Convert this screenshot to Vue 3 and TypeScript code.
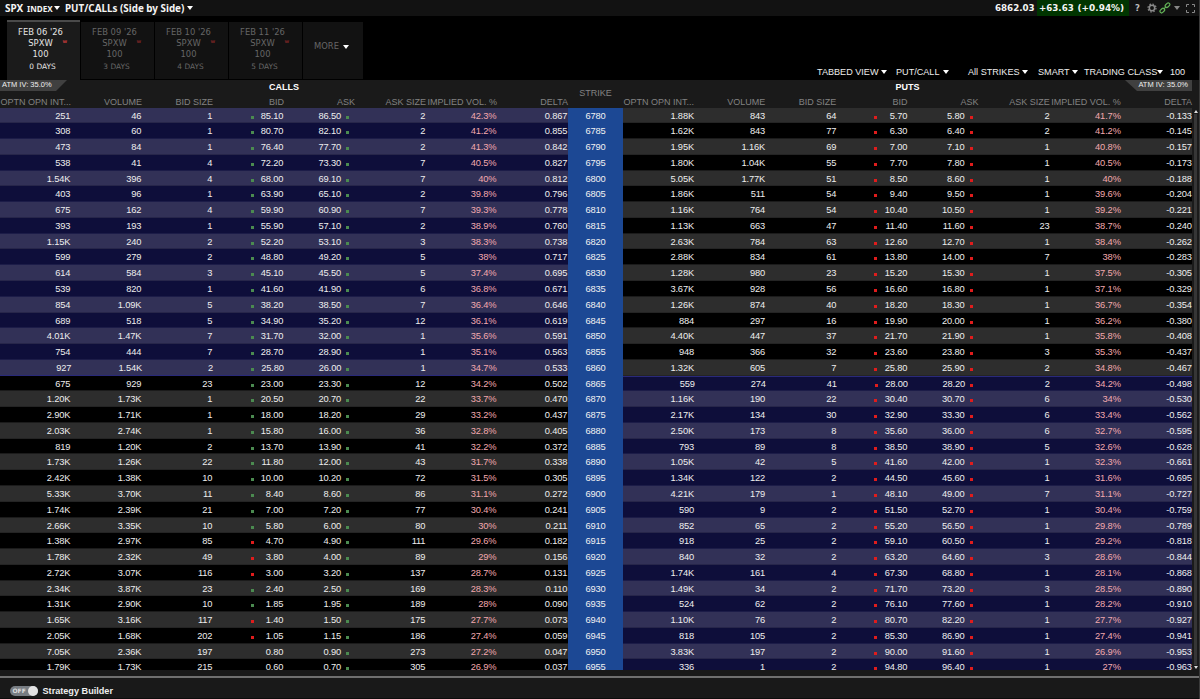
<script setup lang="ts">
interface Side { cells: string[]; bidDot: string; askDot: string }
interface Row { strike: number; call: Side; put: Side }

const callData = `251 46 1 85.10 86.50 2 42.3% 0.867
308 60 1 80.70 82.10 2 41.2% 0.855
473 84 1 76.40 77.70 2 41.3% 0.842
538 41 4 72.20 73.30 7 40.5% 0.827
1.54K 396 4 68.00 69.10 7 40% 0.812
403 96 1 63.90 65.10 2 39.8% 0.796
675 162 4 59.90 60.90 7 39.3% 0.778
393 193 1 55.90 57.10 2 38.9% 0.760
1.15K 240 2 52.20 53.10 3 38.3% 0.738
599 279 2 48.80 49.20 5 38% 0.717
614 584 3 45.10 45.50 5 37.4% 0.695
539 820 1 41.60 41.90 6 36.8% 0.671
854 1.09K 5 38.20 38.50 7 36.4% 0.646
689 518 5 34.90 35.20 12 36.1% 0.619
4.01K 1.47K 7 31.70 32.00 1 35.6% 0.591
754 444 7 28.70 28.90 1 35.1% 0.563
927 1.54K 2 25.80 26.00 1 34.7% 0.533
675 929 23 23.00 23.30 12 34.2% 0.502
1.20K 1.73K 1 20.50 20.70 22 33.7% 0.470
2.90K 1.71K 1 18.00 18.20 29 33.2% 0.437
2.03K 2.74K 1 15.80 16.00 36 32.8% 0.405
819 1.20K 2 13.70 13.90 41 32.2% 0.372
1.73K 1.26K 22 11.80 12.00 43 31.7% 0.338
2.42K 1.38K 10 10.00 10.20 72 31.5% 0.305
5.33K 3.70K 11 8.40 8.60 86 31.1% 0.272
1.74K 2.39K 21 7.00 7.20 77 30.4% 0.241
2.66K 3.35K 10 5.80 6.00 80 30% 0.211
1.38K 2.97K 85 4.70 4.90 111 29.6% 0.182
1.78K 2.32K 49 3.80 4.00 89 29% 0.156
2.72K 3.07K 116 3.00 3.20 137 28.7% 0.131
2.34K 3.87K 23 2.40 2.50 169 28.3% 0.110
1.31K 2.90K 10 1.85 1.95 189 28% 0.090
1.65K 3.16K 117 1.40 1.50 175 27.7% 0.073
2.05K 1.68K 202 1.05 1.15 186 27.4% 0.059
7.05K 2.36K 197 0.80 0.90 273 27.2% 0.047
1.79K 1.73K 215 0.60 0.70 305 26.9% 0.037`

const putData = `1.88K 843 64 5.70 5.80 2 41.7% -0.133
1.62K 843 77 6.30 6.40 2 41.2% -0.145
1.95K 1.16K 69 7.00 7.10 1 40.8% -0.157
1.80K 1.04K 55 7.70 7.80 1 40.5% -0.173
5.05K 1.77K 51 8.50 8.60 1 40% -0.188
1.86K 511 54 9.40 9.50 1 39.6% -0.204
1.16K 764 54 10.40 10.50 1 39.2% -0.221
1.13K 663 47 11.40 11.60 23 38.7% -0.240
2.63K 784 63 12.60 12.70 1 38.4% -0.262
2.88K 834 61 13.80 14.00 7 38% -0.283
1.28K 980 23 15.20 15.30 1 37.5% -0.305
3.67K 928 56 16.60 16.80 1 37.1% -0.329
1.26K 874 40 18.20 18.30 1 36.7% -0.354
884 297 16 19.90 20.00 1 36.2% -0.380
4.40K 447 37 21.70 21.90 1 35.8% -0.408
948 366 32 23.60 23.80 3 35.3% -0.437
1.32K 605 7 25.80 25.90 2 34.8% -0.467
559 274 41 28.00 28.20 2 34.2% -0.498
1.16K 190 22 30.40 30.70 6 34% -0.530
2.17K 134 30 32.90 33.30 6 33.4% -0.562
2.50K 173 8 35.60 36.00 6 32.7% -0.595
793 89 8 38.50 38.90 5 32.6% -0.628
1.05K 42 5 41.60 42.00 1 32.3% -0.661
1.34K 122 2 44.50 45.60 1 31.6% -0.695
4.21K 179 1 48.10 49.00 7 31.1% -0.727
590 9 2 51.50 52.70 1 30.4% -0.759
852 65 2 55.20 56.50 1 29.8% -0.789
918 25 2 59.10 60.50 1 29.2% -0.818
840 32 2 63.20 64.60 3 28.6% -0.844
1.74K 161 4 67.30 68.80 1 28.1% -0.868
1.49K 34 2 71.70 73.20 3 28.5% -0.890
524 62 2 76.10 77.60 1 28.2% -0.910
1.10K 76 2 80.70 82.20 1 27.7% -0.927
818 105 2 85.30 86.90 1 27.4% -0.941
3.83K 197 2 90.00 91.60 1 26.9% -0.953
336 1 2 94.80 96.40 1 27% -0.963`

const redCallBids = [6915, 6920, 6925, 6940, 6945]
const blankCallBids = [6950, 6955]
const puts = putData.split('\n')
const rows: Row[] = callData.split('\n').map((line, i) => {
  const strike = 6780 + i * 5
  const bidDot = redCallBids.includes(strike) ? 'red' : blankCallBids.includes(strike) ? 'none' : 'green'
  return {
    strike,
    call: { cells: line.split(' '), bidDot, askDot: 'green' },
    put: { cells: puts[i].split(' '), bidDot: 'red', askDot: 'red' },
  }
})

const columns = ['OPTN OPN INT...', 'VOLUME', 'BID SIZE', 'BID', 'ASK', 'ASK SIZE', 'IMPLIED VOL. %', 'DELTA']
const colKeys = ['oi', 'vol', 'bsz', 'bid', 'ask', 'asz', 'iv', 'delta']
const expiries = [
  { date: "FEB 06 '26", days: '0 DAYS' },
  { date: "FEB 09 '26", days: '3 DAYS' },
  { date: "FEB 10 '26", days: '4 DAYS' },
  { date: "FEB 11 '26", days: '5 DAYS' },
]
const filters = [
  { label: 'TABBED VIEW', key: 'view' },
  { label: 'PUT/CALL', key: 'pc' },
  { label: 'All STRIKES', key: 'strikes' },
  { label: 'SMART', key: 'smart' },
  { label: 'TRADING CLASS', key: 'class' },
]
</script>

<template>
  <div class="window">
    <header class="titlebar">
      <span class="sym">SPX</span><span class="idx">INDEX</span><i class="caret"></i>
      <span class="mode">PUT/CALLs (Side by Side)</span><i class="caret"></i>
      <span class="last">6862.03</span>
      <span class="change"><span class="chg">+63.63</span><span class="pct">(+0.94%)</span></span>
      <span class="help">?</span>
      <svg class="gear" viewBox="0 0 10 10"><circle cx="5" cy="5" r="2.7" fill="none" stroke="#8a8a8a" stroke-width="1.5" /><circle cx="5" cy="5" r="4" fill="none" stroke="#8a8a8a" stroke-width="1.2" stroke-dasharray="1.6 1.54" /></svg>
      <svg class="link" viewBox="0 0 12 12"><g fill="none" stroke="#63b257" stroke-width="1.2"><rect x="-2.6" y="-1.6" width="5.2" height="3.2" rx="1.6" transform="translate(8.5 3.2) rotate(-45)" /><rect x="-2.6" y="-1.6" width="5.2" height="3.2" rx="1.6" transform="translate(3.3 8.6) rotate(-45)" /><path d="M4.7 7.2 7.1 4.7" /></g></svg>
      <i class="caret dim"></i>
      <svg class="expand" viewBox="0 0 9 9"><path d="M.5 3V.5H3M6 .5H8.5V3M8.5 6V8.5H6M3 8.5H.5V6" fill="none" stroke="#888" /></svg>
    </header>

    <section class="toolbar">
      <div v-for="(e, i) in expiries" :key="e.date" class="tab" :class="{ active: i === 0 }">
        <span class="date">{{ e.date }}</span>
        <span class="cls">SPXW<sup>w</sup></span>
        <span class="mult">100</span>
        <span class="days">{{ e.days }}</span>
      </div>
      <div class="tab more">MORE<i class="caret"></i></div>
      <nav class="filters">
        <span v-for="f in filters" :key="f.key" class="filter" :class="f.key">{{ f.label }}<i class="caret"></i></span>
        <span class="hundred">100</span>
      </nav>
    </section>

    <main class="chain">
      <div class="head">
        <div class="side-head">
          <div class="caption"><span>CALLS</span></div>
          <div class="cols"><span v-for="c in columns" :key="c">{{ c }}</span></div>
          <div class="atm left"><span>ATM IV: 35.0%</span></div>
        </div>
        <div class="strike-head">STRIKE</div>
        <div class="side-head">
          <div class="caption"><span>PUTS</span></div>
          <div class="cols"><span v-for="c in columns" :key="c">{{ c }}</span></div>
          <div class="atm right"><span>ATM IV: 35.0%</span></div>
        </div>
      </div>
      <div class="body">
        <div class="rows">
          <div v-for="(r, i) in rows" :key="r.strike" class="row" :class="{ odd: i % 2 === 1 }">
            <div class="side" :class="{ itm: r.strike < 6862, edge: r.strike === 6860 }">
              <span v-for="(c, k) in r.call.cells" :key="k" :class="colKeys[k]">
                <i v-if="k === 3" class="dot" :class="r.call.bidDot"></i>{{ c }}<i v-if="k === 4" class="dot" :class="r.call.askDot"></i>
              </span>
            </div>
            <div class="strike">{{ r.strike }}</div>
            <div class="side puts" :class="{ itm: r.strike > 6862, edge: r.strike === 6865 }">
              <span v-for="(c, k) in r.put.cells" :key="k" :class="colKeys[k]">
                <i v-if="k === 3" class="dot" :class="r.put.bidDot"></i>{{ c }}<i v-if="k === 4" class="dot" :class="r.put.askDot"></i>
              </span>
            </div>
          </div>
        </div>
        <div class="scroll"><i class="up"></i><i class="track"></i><i class="down"></i></div>
      </div>
    </main>

    <footer class="footer">
      <div class="toggle"><span>OFF</span><i></i></div>
      <b>Strategy Builder</b>
    </footer>
  </div>
</template>

<style>
html, body { margin: 0; background: #000; overflow: hidden; }
</style>

<style scoped>
* { box-sizing: border-box; }
.window {
  width: 1200px; height: 699px; display: flex; flex-direction: column; overflow: hidden;
  background: #000; border-right: 1px solid #3a3a3a; position: relative;
  font-family: "Liberation Sans", Arial, sans-serif; font-size: 9px; color: #eee; white-space: nowrap;
}
.caret { display: inline-block; width: 0; height: 0; flex: none; border: 3px solid transparent; border-top: 4px solid #fff; border-bottom: 0; }
.caret.dim { border-top-color: #888; margin-left: 3px; }

.titlebar { height: 16px; flex: none; display: flex; align-items: center; background: #121212; padding-left: 5px; font: bold 9px "Noto Sans", sans-serif; color: #f4f4f4; }
.sym { width: 22px; font-size: 10px; }
.idx { width: 27px; font-size: 8.1px; padding-top: 1px; }
.mode { margin-left: 5px; width: 122px; font-size: 9.85px; }
.last { margin-left: auto; width: 42px; font: bold 8.7px "DejaVu Sans", sans-serif; }
.change { width: 92px; height: 16px; background: #003500; display: flex; align-items: center; padding-left: 2px; font: bold 8.7px "DejaVu Sans", sans-serif; }
.chg { width: 38.5px; }
.pct { font-size: 8.95px; }
.help { margin-left: 6px; width: 11.5px; font: bold 8.5px "DejaVu Sans", sans-serif; color: #bbb; }
.gear { width: 10px; height: 10px; }
.link { width: 12px; height: 12px; margin-left: 2.5px; }
.expand { width: 9px; height: 9px; margin: 0 4px 0 6px; }

.toolbar { height: 64px; flex: none; display: flex; padding: 4px 0 0 7px; background: #000; font-family: "DejaVu Sans", sans-serif; }
.tab { width: 73px; height: 57px; margin: 2px 1px 0 0; background: #121212; color: #666; display: flex; flex-direction: column; align-items: center; padding-top: 5px; font-size: 8.4px; line-height: 11px; }
.tab.active { margin-top: 0; height: 60px; background: #1b1b1b; color: #e4e4e4; border-top: 2px solid #4a4a4a; }
.date, .cls, .mult, .days { position: relative; left: -3px; }
.days { font-size: 7.4px; margin-top: 1px; left: -1px; }
.cls sup { position: absolute; right: -14.5px; top: -1px; font: bold 5px/8px "DejaVu Sans", sans-serif; color: #7a2525; }
.active .cls sup { color: #c23a3a; }
.tab.more { width: 60px; flex-direction: row; padding: 0 0 8px 11px; justify-content: flex-start; font-size: 8.4px; }
.more .caret { margin-left: 4px; }
.filters { margin-left: auto; display: flex; align-items: flex-end; height: 57px; font: 9.1px/10px "Liberation Sans", Arial, sans-serif; color: #eee; }
.filter { display: flex; align-items: center; justify-content: space-between; }
.filter.view { width: 70px; margin-right: 9px; }
.filter.pc { width: 53px; margin-right: 19px; }
.filter.strikes { width: 60px; margin-right: 10px; }
.filter.smart { width: 40px; margin-right: 6px; }
.filter.class { width: 79px; margin-right: 7px; }
.hundred { width: 29px; }

.chain { height: 589.5px; flex: none; display: flex; flex-direction: column; }
.head { height: 27.6px; flex: none; display: flex; background: #1a1a1a; }
.side-head { width: 568px; position: relative; }
.side-head:last-child { width: 569px; }
.caption { height: 14px; display: flex; justify-content: center; align-items: center; font: bold 9px/15px "Liberation Sans", Arial, sans-serif; color: #fff; }
.cols { display: grid; grid-template-columns: repeat(8, 1fr); line-height: 14px; padding-top: 1px; color: #828282; }
.cols span { display: flex; justify-content: flex-end; }
.cols span:first-child { justify-content: flex-start; padding-left: .5px; }
.strike-head { width: 55px; text-align: center; color: #828282; line-height: 27px; }
.atm { position: absolute; top: 0; height: 11px; width: 67px; background: #404040; font: 7.5px/10px "Liberation Sans", Arial, sans-serif; color: #eee; }
.atm.left { left: 0; padding-left: 2px; clip-path: polygon(0 0, 100% 0, 56px 100%, 0 100%); }
.atm.right { right: 0; text-align: right; padding-right: 4px; clip-path: polygon(0 0, 100% 0, 100% 100%, 12px 100%); }

.body { flex: 1; display: flex; overflow: hidden; }
.rows { width: 1192px; flex: none; font-size: 9.3px; letter-spacing: -.13px; }
.row { height: 15.78px; display: flex; line-height: 16.6px; }
.side { width: 568px; display: grid; grid-template-columns: repeat(8, 1fr); background: #2d2d2d; border-bottom: 1px solid #242424; }
.side:last-child { width: 569px; }
.side > span { display: flex; justify-content: flex-end; align-items: flex-start; position: relative; height: 14.7px; padding-right: .6px; }
.side.puts > span { padding-right: .1px; }
.row.odd .side { background: #000; border-bottom-color: #1b1b1b; }
.side.itm { background: #323157; border-bottom-color: #27264a; }
.row.odd .side.itm { background: #0e0e3a; border-bottom-color: #1c1c48; }
.side.edge { padding-left: 1px; border-bottom-color: #29297a; }
.row.odd .side.edge { box-shadow: inset 0 1px #29297a; border-bottom-color: #1c1c48; }
.side > .ask, .side.puts > .ask { padding-right: 14px; }
.side > .iv { color: #f2a9ae; }
.strike { width: 55px; background: #1c4894; text-align: center; color: #f2f2f2; }
.dot { width: 3px; height: 3px; flex: none; }
.bid .dot { position: absolute; left: 37.5px; top: 8px; }
.ask .dot { position: absolute; right: 6px; top: 8px; }
.dot.green { background: #4b8b50; }
.dot.red { background: #e01c1c; }

.scroll { flex: 1; background: #1a1a1a; display: flex; flex-direction: column; align-items: center; padding: 2px 0 1px; }
.scroll .up { border: 2px solid transparent; border-top: 0; border-bottom: 3px solid #ddd; }
.scroll .down { border: 2px solid transparent; border-bottom: 0; border-top: 3px solid #ddd; }
.track { flex: 1; width: 3px; background: #363636; margin: 1px 0; }

.footer { flex: 1; background: #191919; border-bottom: 1px solid #0c0c0c; display: flex; align-items: center; padding: 14px 0 0 9.5px; font-size: 9.15px; position: relative; }
.footer::before { content: ""; position: absolute; left: 0; right: 0; top: 6px; height: 2px; background: #6f6f6f; }
.toggle { width: 28px; height: 10px; border-radius: 5px; background: #777c82; display: flex; align-items: center; justify-content: space-between; padding-left: 3px; margin-right: 5px; }
.toggle span { font: bold 6px "DejaVu Sans", sans-serif; color: #ddd; }
.toggle i { width: 10px; height: 10px; border-radius: 50%; background: #e2e2e2; }
</style>
